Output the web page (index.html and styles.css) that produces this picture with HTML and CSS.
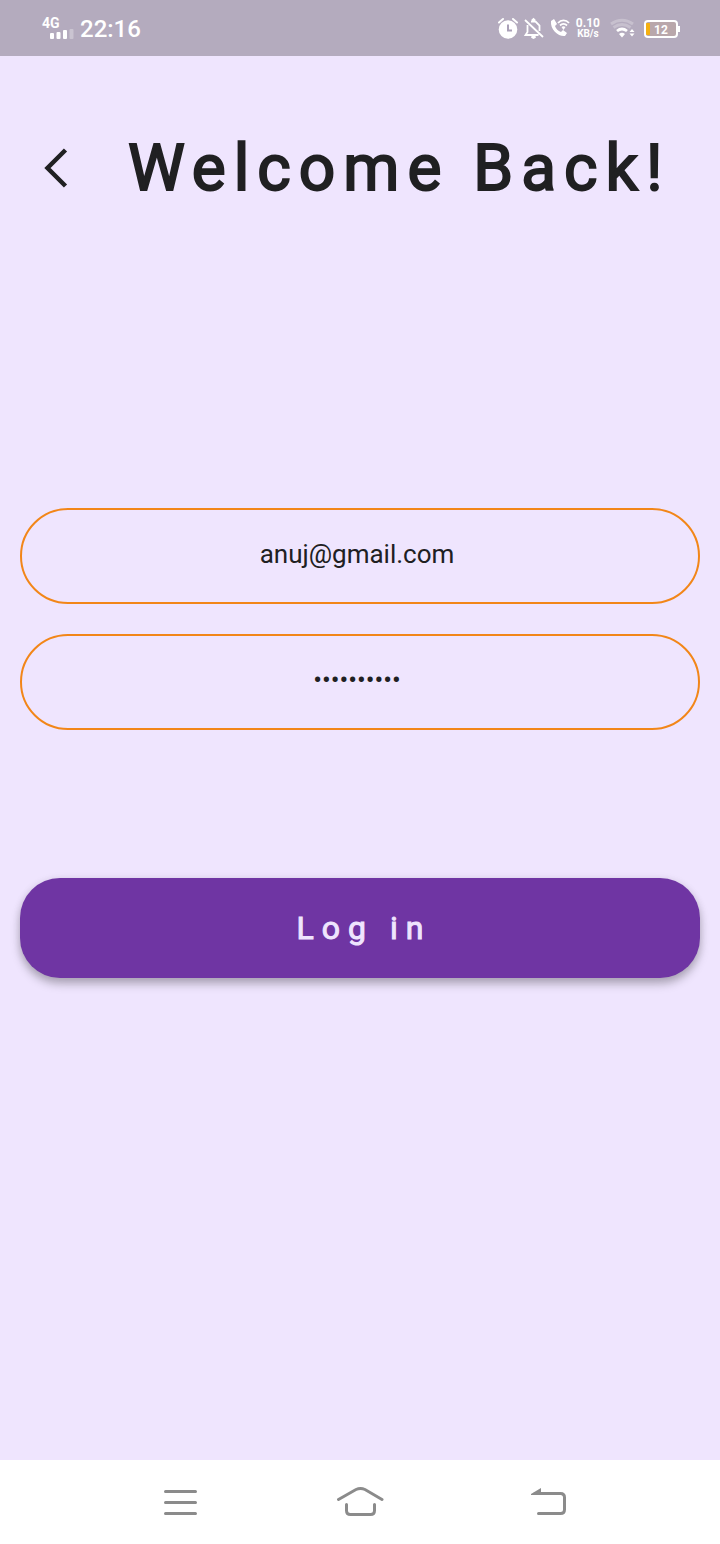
FILE: index.html
```html
<!DOCTYPE html>
<html lang="en">
<head>
<meta charset="utf-8">
<meta name="viewport" content="width=device-width, initial-scale=1">
<title>Welcome Back!</title>
<link rel="stylesheet" href="styles.css">
</head>
<body>
<div class="screen">
  <header class="status">
    <div class="network">
      <span class="network-type">4G</span>
      <svg class="bars" width="24" height="10" viewBox="0 0 24 10" fill="#fff" aria-hidden="true">
        <rect x="0" y="4" width="4" height="6" rx="1"/><rect x="6.500" y="3" width="4" height="7" rx="1"/><rect x="13" y="1" width="4" height="9" rx="1"/><rect x="19.500" y="0" width="4" height="10" rx="1" opacity=".3"/>
      </svg>
    </div>
    <time class="clock">22:16</time>
    <div class="indicators">
      <svg width="20" height="22" viewBox="0 0 20 22" fill="none" aria-hidden="true">
        <circle cx="10" cy="12.500" r="9.300" fill="#fff"/><path d="M1 5.500l4-3.500M19 5.500l-4-3.500" stroke="#fff" stroke-width="2" stroke-linecap="round"/><path d="M10 7.500v6h4" stroke="#aaa0b8" stroke-width="2"/>
      </svg>
      <svg width="20" height="22" viewBox="0 0 20 22" fill="none" stroke="#fff" stroke-width="1.800" aria-hidden="true">
        <path d="M1 3L19 20M3.500 8v7l-2 3h13M7 4.500h4.500l4 4V14M8 3.500l1.500-1.500 1.500 1.500"/><path d="M7.500 20h4l-2 1z" fill="#fff"/>
      </svg>
      <svg width="20" height="22" viewBox="0 0 20 22" fill="none" stroke="#fff" aria-hidden="true">
        <path d="M1 4l3-2 3 5-2 2c1 3 3 5 6 6l2-2 4 3-2 3C9 20 0 13 1 4z" fill="#fff" stroke="none"/><path d="M8 6c3-3.500 8-3.500 11 0M10 8.500c2-2 5-2 7 0" stroke-width="1.800"/><path d="M11.500 10q2-1.500 4 0l-2 3z" fill="#fff" stroke="none"/>
      </svg>
      <div class="speed"><span class="rate">0.10</span><span class="unit">KB/s</span></div>
      <svg class="wifi" width="26" height="20" viewBox="0 0 26 20" fill="none" stroke="#fff" aria-hidden="true">
        <path d="M1 6q11-7.500 22 0M3.500 9.500q8.500-6 17 0" stroke-width="3" opacity=".25"/><path d="M7 13q5-4 10 0" stroke-width="2.800"/><path d="M9 16q3-2.500 6 0l-3 3.500z" fill="#fff" stroke="none"/><path d="M19.500 14l2.500-3 2.500 3zM19.500 15.500l2.500 3 2.500-3z" fill="#fff" stroke="none"/>
      </svg>
      <div class="battery"><span class="charge"></span><span class="level">12</span></div>
    </div>
  </header>

  <main class="content">
    <div class="heading">
      <button class="back" type="button" aria-label="Back">
        <svg width="24" height="40" viewBox="0 0 24 40" fill="none" stroke="#202022" stroke-width="4.500" aria-hidden="true"><path d="M21.500 2L3.500 20l18 18"/></svg>
      </button>
      <h1 class="title">Welcome Back!</h1>
    </div>
    <form class="form">
      <input class="field" type="email" aria-label="Email" value="anuj@gmail.com">
      <input class="field" type="password" aria-label="Password" value="abcdefghij">
      <button class="login" type="button">Log in</button>
    </form>
  </main>

  <nav class="navbar">
    <button class="nav-button" type="button" aria-label="Recent apps">
      <svg width="48" height="32" viewBox="0 0 48 32" aria-hidden="true"><path d="M9.500 5.500h30M9.500 16.500h30M9.500 27.500h30"/></svg>
    </button>
    <button class="nav-button" type="button" aria-label="Home">
      <svg width="48" height="32" viewBox="0 0 48 32" aria-hidden="true"><path d="M2.500 13.500L20 3.500q4.500-2 9 0l17 10M10.500 18.500v6q0 4 4 4h20q4 0 4-4v-6"/></svg>
    </button>
    <button class="nav-button" type="button" aria-label="Return">
      <svg width="66" height="32" viewBox="-18 0 66 32" aria-hidden="true"><path d="M10 7.500h25.500q4 0 4 4v12q0 4-4 4H13.500"/><path class="tip" d="M6 8L16 2v7H6z"/></svg>
    </button>
  </nav>
</div>
</body>
</html>
```
FILE: styles.css
```css
* { box-sizing: border-box; }
body {
  margin: 0;
  background: #efe5fe;
  color: #202022;
  font-family: Roboto, "Liberation Sans", sans-serif;
}
button { border: 0; padding: 0; background: none; font: inherit; color: inherit; }
svg { display: block; flex: none; }

.screen { min-height: 100vh; display: flex; flex-direction: column; }

.status {
  display: flex;
  align-items: center;
  height: 56px;
  padding: 0 40px 0 42px;
  background: #b4abbe;
  color: #fff;
}
.network { display: flex; flex-direction: column; width: 38px; }
.network-type { font-size: 14px; line-height: 12px; font-weight: 700; }
.bars { margin-left: 8px; }
.clock { font-size: 24px; line-height: 28px; font-weight: 500; padding-top: 2px; }
.indicators { display: flex; align-items: center; gap: 6px; margin-left: auto; }
.speed { display: flex; flex-direction: column; align-items: center; font-weight: 700; }
.rate { font-size: 12px; line-height: 12px; }
.unit { font-size: 10px; line-height: 10px; }
.wifi { margin: 0 2px 0 4px; }
.battery {
  position: relative;
  display: flex;
  align-items: center;
  justify-content: center;
  width: 34px;
  height: 18px;
  margin: 2px 2px 0 0;
  border: 2px solid #fff;
  border-radius: 4px;
  background: #b9a7ab;
  font-size: 12px;
  line-height: 14px;
  font-weight: 700;
}
.battery::after {
  content: "";
  position: absolute;
  right: -4px;
  top: 4px;
  width: 2px;
  height: 6px;
  background: #fff;
}
.charge { position: absolute; left: 0; top: 1px; bottom: 1px; width: 4px; background: #f5b011; border-radius: 1px; }
.level { padding-top: 2px; }

.content { flex: 1; padding: 72px 20px 0; }
.heading { display: flex; align-items: center; height: 80px; }
.back { width: 108px; padding-left: 24px; flex: none; }
.title {
  margin: 0;
  padding-top: 2px;
  font-size: 64px;
  line-height: 80px;
  font-weight: 400;
  letter-spacing: 8px;
  white-space: nowrap;
  -webkit-text-stroke: 2px currentColor;
}

.form { display: flex; flex-direction: column; gap: 30px; margin-top: 300px; }
.field {
  width: 100%;
  height: 96px;
  padding: 0 26px 4px 20px;
  border: 2px solid #f28618;
  border-radius: 48px;
  background: none;
  color: #202022;
  font: 400 26px/32px Roboto, "Liberation Sans", sans-serif;
  text-align: center;
  outline: none;
}
.login {
  height: 100px;
  margin-top: 118px;
  padding-left: 8px;
  border-radius: 40px;
  background: #6f35a3;
  box-shadow: 0 6px 10px rgba(0, 0, 0, .26), 0 1px 8px rgba(0, 0, 0, .08);
  color: #efe5fe;
  font-size: 32px;
  line-height: 40px;
  font-weight: 400;
  letter-spacing: 8px;
  -webkit-text-stroke: 1px currentColor;
}

.navbar {
  display: grid;
  grid-template-columns: repeat(3, 1fr);
  place-items: center;
  height: 84px;
  padding: 0 12.5%;
  background: #fff;
}
.nav-button svg { fill: none; stroke: #8b8b8b; stroke-width: 3; stroke-linecap: round; }
.nav-button .tip { fill: #8b8b8b; stroke: none; }
```
